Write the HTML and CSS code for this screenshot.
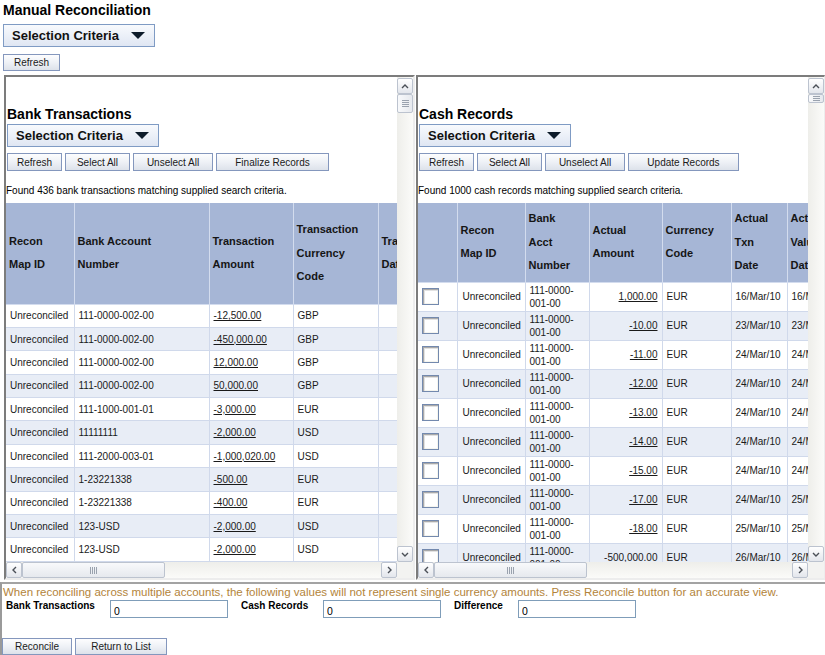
FILE: index.html
```html
<!DOCTYPE html>
<html>
<head>
<meta charset="utf-8">
<link rel="stylesheet" href="styles.css">
</head>
<body>
<div class="top">
  <h1 class="title">Manual Reconciliation</h1>
  <div class="selcrit">Selection Criteria <span class="tri"></span></div>
  <button class="btn btn-top">Refresh</button>
</div>

<div class="frames">
  <div class="panel panel-left">
    <div class="view">
      <h2 class="ptitle">Bank Transactions</h2>
      <div class="selcrit selcrit-p">Selection Criteria <span class="tri"></span></div>
      <div class="btnrow">
        <button class="btn w55">Refresh</button>
        <button class="btn w65">Select All</button>
        <button class="btn w80">Unselect All</button>
        <button class="btn w113">Finalize Records</button>
      </div>
      <p class="found">Found 436 bank transactions matching supplied search criteria.</p>
      <table class="grid bt">
        <colgroup><col style="width:68px"><col style="width:135px"><col style="width:84px"><col style="width:85px"><col style="width:90px"></colgroup>
        <thead>
          <tr><th>Recon<br>Map ID</th><th>Bank Account<br>Number</th><th>Transaction<br>Amount</th><th>Transaction<br>Currency<br>Code</th><th>Transaction<br>Date</th></tr>
        </thead>
        <tbody>
          <tr><td>Unreconciled</td><td>111-0000-002-00</td><td><span class="amt">-12,500.00</span></td><td>GBP</td><td></td></tr>
          <tr><td>Unreconciled</td><td>111-0000-002-00</td><td><span class="amt">-450,000.00</span></td><td>GBP</td><td></td></tr>
          <tr><td>Unreconciled</td><td>111-0000-002-00</td><td><span class="amt">12,000.00</span></td><td>GBP</td><td></td></tr>
          <tr><td>Unreconciled</td><td>111-0000-002-00</td><td><span class="amt">50,000.00</span></td><td>GBP</td><td></td></tr>
          <tr><td>Unreconciled</td><td>111-1000-001-01</td><td><span class="amt">-3,000.00</span></td><td>EUR</td><td></td></tr>
          <tr><td>Unreconciled</td><td>11111111</td><td><span class="amt">-2,000.00</span></td><td>USD</td><td></td></tr>
          <tr><td>Unreconciled</td><td>111-2000-003-01</td><td><span class="amt">-1,000,020.00</span></td><td>USD</td><td></td></tr>
          <tr><td>Unreconciled</td><td>1-23221338</td><td><span class="amt">-500.00</span></td><td>EUR</td><td></td></tr>
          <tr><td>Unreconciled</td><td>1-23221338</td><td><span class="amt">-400.00</span></td><td>EUR</td><td></td></tr>
          <tr><td>Unreconciled</td><td>123-USD</td><td><span class="amt">-2,000.00</span></td><td>USD</td><td></td></tr>
          <tr><td>Unreconciled</td><td>123-USD</td><td><span class="amt">-2,000.00</span></td><td>USD</td><td></td></tr>
          <tr><td>Unreconciled</td><td>123-USD</td><td><span class="amt">-1,500.00</span></td><td>USD</td><td></td></tr>
        </tbody>
      </table>
    </div>
    <div class="vscroll">
      <div class="sbtn"><svg width="8" height="5" viewBox="0 0 8 5"><polyline points="1,4 4,1 7,4" fill="none" stroke="#4a4f57" stroke-width="1.4"/></svg></div>
      <div class="vthumb vthumb-l"><span class="grip-h"></span></div>
      <div class="spacer"></div>
      <div class="sbtn"><svg width="8" height="5" viewBox="0 0 8 5"><polyline points="1,1 4,4 7,1" fill="none" stroke="#4a4f57" stroke-width="1.4"/></svg></div>
    </div>
    <div class="hscroll">
      <div class="sbtn"><svg width="5" height="8" viewBox="0 0 5 8"><polyline points="4,1 1,4 4,7" fill="none" stroke="#4a4f57" stroke-width="1.4"/></svg></div>
      <div class="hthumb hthumb-l"><span class="grip-v"></span></div>
      <div class="spacer"></div>
      <div class="sbtn"><svg width="5" height="8" viewBox="0 0 5 8"><polyline points="1,1 4,4 1,7" fill="none" stroke="#4a4f57" stroke-width="1.4"/></svg></div>
    </div>
    <div class="corner"></div>
  </div>

  <div class="panel panel-right">
    <div class="view">
      <h2 class="ptitle">Cash Records</h2>
      <div class="selcrit selcrit-p">Selection Criteria <span class="tri"></span></div>
      <div class="btnrow">
        <button class="btn w55">Refresh</button>
        <button class="btn w65">Select All</button>
        <button class="btn w80">Unselect All</button>
        <button class="btn w111">Update Records</button>
      </div>
      <p class="found">Found 1000 cash records matching supplied search criteria.</p>
      <table class="grid cr">
        <colgroup><col style="width:39px"><col style="width:68px"><col style="width:64px"><col style="width:73px"><col style="width:69px"><col style="width:56px"><col style="width:60px"></colgroup>
        <thead>
          <tr><th></th><th>Recon<br>Map ID</th><th>Bank<br>Acct<br>Number</th><th>Actual<br>Amount</th><th>Currency<br>Code</th><th>Actual<br>Txn<br>Date</th><th>Actual<br>Value<br>Date</th></tr>
        </thead>
        <tbody>
          <tr><td class="cbc"><span class="cb"></span></td><td>Unreconciled</td><td class="acct">111-0000-<br>001-00</td><td class="num"><span class="amt">1,000.00</span></td><td>EUR</td><td class="dt">16/Mar/10</td><td class="dt">16/Mar/10</td></tr>
          <tr><td class="cbc"><span class="cb"></span></td><td>Unreconciled</td><td class="acct">111-0000-<br>001-00</td><td class="num"><span class="amt">-10.00</span></td><td>EUR</td><td class="dt">23/Mar/10</td><td class="dt">23/Mar/10</td></tr>
          <tr><td class="cbc"><span class="cb"></span></td><td>Unreconciled</td><td class="acct">111-0000-<br>001-00</td><td class="num"><span class="amt">-11.00</span></td><td>EUR</td><td class="dt">24/Mar/10</td><td class="dt">24/Mar/10</td></tr>
          <tr><td class="cbc"><span class="cb"></span></td><td>Unreconciled</td><td class="acct">111-0000-<br>001-00</td><td class="num"><span class="amt">-12.00</span></td><td>EUR</td><td class="dt">24/Mar/10</td><td class="dt">24/Mar/10</td></tr>
          <tr><td class="cbc"><span class="cb"></span></td><td>Unreconciled</td><td class="acct">111-0000-<br>001-00</td><td class="num"><span class="amt">-13.00</span></td><td>EUR</td><td class="dt">24/Mar/10</td><td class="dt">24/Mar/10</td></tr>
          <tr><td class="cbc"><span class="cb"></span></td><td>Unreconciled</td><td class="acct">111-0000-<br>001-00</td><td class="num"><span class="amt">-14.00</span></td><td>EUR</td><td class="dt">24/Mar/10</td><td class="dt">24/Mar/10</td></tr>
          <tr><td class="cbc"><span class="cb"></span></td><td>Unreconciled</td><td class="acct">111-0000-<br>001-00</td><td class="num"><span class="amt">-15.00</span></td><td>EUR</td><td class="dt">24/Mar/10</td><td class="dt">24/Mar/10</td></tr>
          <tr><td class="cbc"><span class="cb"></span></td><td>Unreconciled</td><td class="acct">111-0000-<br>001-00</td><td class="num"><span class="amt">-17.00</span></td><td>EUR</td><td class="dt">24/Mar/10</td><td class="dt">25/Mar/10</td></tr>
          <tr><td class="cbc"><span class="cb"></span></td><td>Unreconciled</td><td class="acct">111-0000-<br>001-00</td><td class="num"><span class="amt">-18.00</span></td><td>EUR</td><td class="dt">25/Mar/10</td><td class="dt">25/Mar/10</td></tr>
          <tr><td class="cbc"><span class="cb"></span></td><td>Unreconciled</td><td class="acct">111-0000-<br>001-00</td><td class="num"><span class="amt">-500,000.00</span></td><td>EUR</td><td class="dt">26/Mar/10</td><td class="dt">26/Mar/10</td></tr>
        </tbody>
      </table>
    </div>
    <div class="vscroll">
      <div class="sbtn"><svg width="8" height="5" viewBox="0 0 8 5"><polyline points="1,4 4,1 7,4" fill="none" stroke="#4a4f57" stroke-width="1.4"/></svg></div>
      <div class="vthumb vthumb-r"><span class="grip-h"></span></div>
      <div class="spacer"></div>
      <div class="sbtn"><svg width="8" height="5" viewBox="0 0 8 5"><polyline points="1,1 4,4 7,1" fill="none" stroke="#4a4f57" stroke-width="1.4"/></svg></div>
    </div>
    <div class="hscroll">
      <div class="sbtn"><svg width="5" height="8" viewBox="0 0 5 8"><polyline points="4,1 1,4 4,7" fill="none" stroke="#4a4f57" stroke-width="1.4"/></svg></div>
      <div class="hthumb hthumb-r"><span class="grip-v"></span></div>
      <div class="spacer"></div>
      <div class="sbtn"><svg width="5" height="8" viewBox="0 0 5 8"><polyline points="1,1 4,4 1,7" fill="none" stroke="#4a4f57" stroke-width="1.4"/></svg></div>
    </div>
    <div class="corner"></div>
  </div>
</div>

<div class="bottom">
  <p class="note">When reconciling across multiple accounts, the following values will not represent single currency amounts. Press Reconcile button for an accurate view.</p>
  <div class="totals">
    <label class="lbl lbl1">Bank Transactions</label><input class="tin" value="0">
    <label class="lbl lbl2">Cash Records</label><input class="tin" value="0">
    <label class="lbl lbl3">Difference</label><input class="tin" value="0">
  </div>
  <div class="actions">
    <button class="btn w70">Reconcile</button>
    <button class="btn w92">Return to List</button>
  </div>
</div>
</body>
</html>
```

FILE: styles.css
```css
* { box-sizing: border-box; }
html, body { margin: 0; padding: 0; }
body {
  width: 825px;
  height: 655px;
  overflow: hidden;
  background: #fff;
  color: #1a1a1a;
  font-family: "Liberation Sans", Arial, sans-serif;
  font-size: 10px;
}

/* ---------- top ---------- */
.top { padding-left: 3px; }
.title {
  margin: 0;
  padding-top: 1px;
  font-size: 14px;
  line-height: 18px;
  font-weight: bold;
  color: #000;
}
.selcrit {
  display: flex;
  align-items: center;
  width: 152px;
  height: 23px;
  margin-top: 5px;
  padding-left: 8px;
  border: 1px solid #7f9bc4;
  background: linear-gradient(#f8fafd, #dfe6f3);
  font-size: 13px;
  font-weight: bold;
  color: #111;
}
.tri {
  width: 0;
  height: 0;
  margin-left: 12px;
  border-left: 7px solid transparent;
  border-right: 7px solid transparent;
  border-top: 7px solid #0d1b2a;
}
.btn {
  display: inline-flex;
  align-items: center;
  justify-content: center;
  height: 18px;
  padding: 0;
  border: 1px solid #8497bd;
  border-radius: 0;
  background: linear-gradient(#fdfdfe 0%, #eef1f6 50%, #dde2ea 100%);
  font-family: "Liberation Sans", Arial, sans-serif;
  font-size: 10px;
  color: #1a1a1a;
}
.btn-top { display: flex; width: 57px; height: 17px; margin-top: 7px; }
.w55 { width: 55px; }
.w65 { width: 65px; }
.w70 { width: 70px; }
.w80 { width: 80px; }
.w92 { width: 92px; }
.w111 { width: 111px; }
.w113 { width: 113px; }

/* ---------- frames ---------- */
.frames {
  display: flex;
  gap: 1px;
  margin-top: 4px;
  padding-left: 4px;
  height: 505px;
}
.panel {
  display: grid;
  grid-template-columns: 1fr 16px;
  grid-template-rows: 1fr 16px;
  height: 505px;
  border-top: 2px solid #7c7c7c;
  border-left: 2px solid #7c7c7c;
  border-bottom: 2px solid #ededed;
}
.panel-left { width: 411px; border-right: 2px solid #ededed; }
.panel-right { width: 409px; border-right: 1px solid #ededed; }
.view { overflow: hidden; background: #fff; }

.ptitle {
  margin: 28px 0 0 1px;
  font-size: 14px;
  line-height: 18px;
  font-weight: bold;
  color: #000;
}
.selcrit-p { margin: 1px 0 0 1px; height: 23px; }
.btnrow { display: flex; gap: 3px; margin: 6px 0 0 1px; }
.found {
  margin: 13px 0 0 0;
  font-size: 10px;
  line-height: 14px;
  color: #000;
}

/* ---------- grid tables ---------- */
.grid {
  margin-top: 5px;
  border-collapse: collapse;
  table-layout: fixed;
}
.bt { width: 462px; }
.cr { width: 429px; }
.grid th {
  padding: 0 3px;
  background: #a6b6d6;
  border: 1px solid #d3dcee;
  border-top: 0;
  font-size: 11px;
  font-weight: bold;
  line-height: 23.5px;
  text-align: left;
  vertical-align: middle;
  color: #151515;
  white-space: nowrap;
  overflow: hidden;
}
.bt thead tr { height: 101px; }
.cr thead tr { height: 79px; }
.grid td {
  padding: 0 4px;
  border: 1px solid #d0d9eb;
  font-size: 10px;
  line-height: 13px;
  white-space: nowrap;
  overflow: hidden;
  vertical-align: middle;
}
.grid th:first-child, .grid td:first-child { border-left: 0; }
.bt tbody tr { height: 23.4px; }
.cr tbody tr { height: 29px; }
.grid tbody tr:nth-child(even) td { background: #e8edf6; }
.amt { text-decoration: underline; }
.num { text-align: right; }
.dt { padding-left: 6px; }
.cr td:nth-child(2) { padding-left: 5px; }
.cbc { padding: 0 0 0 5px; }
.cb {
  display: block;
  width: 17px;
  height: 17px;
  border: 1px solid #7389ae;
  background: #fff;
  box-shadow: inset 1px 1px 0 #a9a9a9, inset 2px 2px 0 #e2e2e2, inset -1px -1px 0 #f5f5ef;
}

/* ---------- scrollbars ---------- */
.vscroll {
  display: flex;
  flex-direction: column;
  background: linear-gradient(to right, #eeeeea, #fbfbf9);
  padding-top: 1px;
}
.hscroll {
  display: flex;
  background: linear-gradient(#eeeeea, #fbfbf9);
}
.corner { background: #f3f3f1; }
.spacer { flex: 1; }
.sbtn {
  display: flex;
  align-items: center;
  justify-content: center;
  width: 16px;
  height: 16px;
  flex: none;
  border: 1px solid #bcc3cf;
  border-radius: 2px;
  background: linear-gradient(#ffffff, #e3e6ec);
}
.vthumb, .hthumb {
  display: flex;
  align-items: center;
  justify-content: center;
  border: 1px solid #bcc3cf;
  border-radius: 2px;
  background: linear-gradient(to right, #f8f9fb, #e6e9ee);
  flex: none;
}
.vthumb { width: 16px; }
.vthumb-l { height: 19px; }
.vthumb-r { height: 9px; }
.hthumb { height: 16px; background: linear-gradient(#f8f9fb, #e6e9ee); }
.hthumb-l { width: 143px; }
.hthumb-r { width: 153px; }
.grip-h {
  width: 7px;
  height: 7px;
  background: repeating-linear-gradient(#9aa2ae 0 1px, transparent 1px 2px);
}
.vthumb-r .grip-h { height: 5px; }
.grip-v {
  width: 7px;
  height: 7px;
  background: repeating-linear-gradient(to right, #9aa2ae 0 1px, transparent 1px 2px);
}

/* ---------- bottom ---------- */
.bottom {
  margin-top: 2px;
  height: 73px;
  border-top: 2px solid #a3a3a3;
  border-left: 2px solid #9a9a9a;
}
.note {
  margin: 0;
  padding: 2px 0 0 1px;
  font-size: 11.5px;
  line-height: 13px;
  color: #b3843a;
}
.totals {
  display: flex;
  align-items: flex-start;
  margin-top: 1px;
  padding-left: 4px;
}
.lbl {
  font-size: 10px;
  font-weight: bold;
  line-height: 12px;
  padding-top: 0;
  color: #000;
}
.lbl1 { width: 104px; }
.lbl2 { width: 82px; margin-left: 13px; }
.lbl3 { width: 64px; margin-left: 13px; }
.tin {
  width: 118px;
  height: 18px;
  padding: 3px 0 0 3px;
  border: 1px solid #7f9db9;
  font-family: "Liberation Sans", Arial, sans-serif;
  font-size: 10.5px;
  color: #000;
}
.actions {
  display: flex;
  gap: 3px;
  margin-top: 20px;
}
.actions .btn { height: 17px; }
```
